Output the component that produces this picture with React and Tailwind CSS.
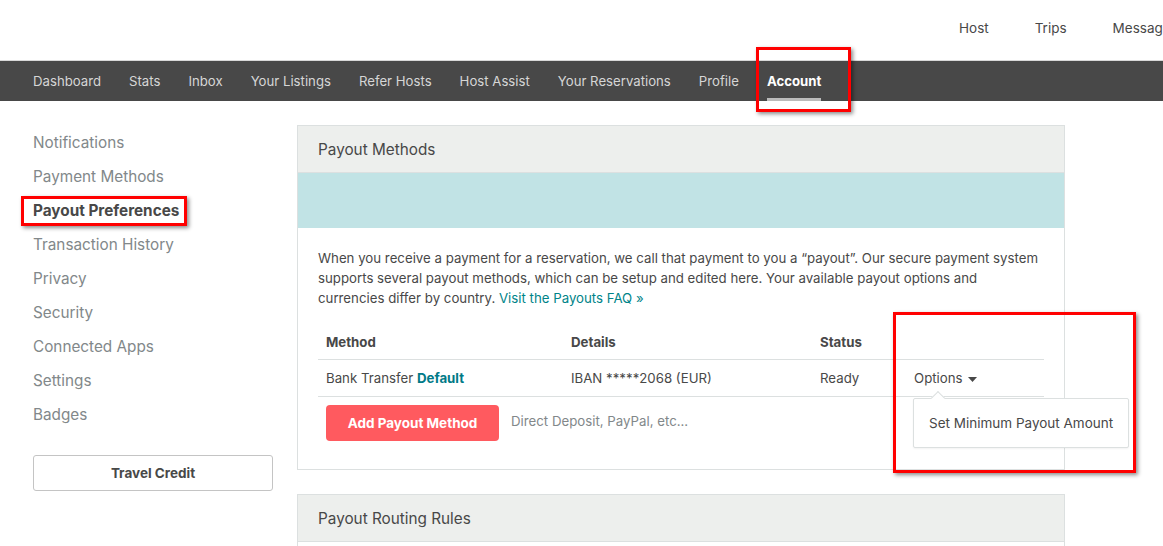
import React from "react";

const navItems = ["Dashboard","Stats","Inbox","Your Listings","Refer Hosts","Host Assist","Your Reservations","Profile"];
const sideItems = ["Notifications","Payment Methods","Payout Preferences","Transaction History","Privacy","Security","Connected Apps","Settings","Badges"];

function RedBox({ className }) {
  return <div className={"absolute border-[3px] border-[#ff0000] shadow-[2px_2px_4px_rgba(0,0,0,0.45)] pointer-events-none " + className} />;
}

export default function App() {
  return (
    <div className="relative w-[1163px] h-[546px] overflow-hidden bg-white text-[#484848]" style={{ fontFamily: "Inter, 'Liberation Sans', sans-serif" }}>
      {/* top bar */}
      <div className="h-[60px] flex items-center pl-[959px] gap-[46px] whitespace-nowrap text-[13.5px] text-[#484848] pb-[3px]">
        <span>Host</span>
        <span>Trips</span>
        <span>Messages</span>
      </div>
      {/* nav */}
      <div className="h-[41px] border-t border-[#d8d8d8] bg-[#484848] flex items-stretch pl-[33px] gap-[28px] text-[13.2px] text-[#d6d6d6] whitespace-nowrap">
        {navItems.map((n) => (
          <div key={n} className="flex items-center pt-[2px]">{n}</div>
        ))}
        <div className="relative flex items-center pt-[2px] text-white font-bold">
          Account
          <div className="absolute left-0 right-0 bottom-0 h-[3px] bg-[#bbbbbb]" />
        </div>
      </div>
      {/* content */}
      <div className="flex pt-[25px] pl-[33px]">
        <div className="w-[264px] shrink-0">
          {sideItems.map((s) => (
            <div key={s} className={"h-[34px] flex items-center text-[15.3px] " + (s === "Payout Preferences" ? "font-bold text-[#484848]" : "text-[#82888a]")}>{s}</div>
          ))}
          <button className="mt-[23px] w-[240px] h-[36px] border border-[#c4c4c4] rounded-[3px] text-[13.5px] font-bold text-[#484848] bg-white">Travel Credit</button>
        </div>
        <div className="w-[768px] shrink-0 -mt-[1px]">
          <div className="border border-[#dce0e0]">
            <div className="h-[47px] bg-[#edefed] border-b border-[#dce0e0] flex items-center pt-[2px] px-[20px] text-[15.3px]">Payout Methods</div>
            <div className="h-[55px] bg-[#c1e3e5]" />
            <div className="px-[20px] pt-[20px] pb-[28px]">
              <p className="text-[13.25px] leading-[20px] text-[#484848]">
                When you receive a payment for a reservation, we call that payment to you a “payout”. Our secure payment system supports several payout methods, which can be setup and edited here. Your available payout options and currencies differ by country. <span className="text-[#008489]">Visit the Payouts FAQ »</span>
              </p>
              <div className="mt-[17px] text-[13.25px]">
                <div className="grid grid-cols-[245px_249px_94px_1fr] h-[35px] items-center pt-[1px] border-b border-[#dce0e0] font-bold">
                  <div className="px-[8px]">Method</div>
                  <div className="px-[8px]">Details</div>
                  <div className="px-[8px]">Status</div>
                  <div />
                </div>
                <div className="grid grid-cols-[245px_249px_94px_1fr] h-[37px] items-center pt-[2px] border-b border-[#dce0e0]">
                  <div className="px-[8px]">Bank Transfer <span className="font-bold text-[#007a87]">Default</span></div>
                  <div className="px-[8px]">IBAN *****2068 (EUR)</div>
                  <div className="px-[8px]">Ready</div>
                  <div className="px-[8px] relative">
                    <span className="inline-flex items-center gap-[5px]">Options
                      <svg width="9" height="5" viewBox="0 0 9 5"><path d="M0 0h9L4.5 5z" fill="#484848" /></svg>
                    </span>
                    <div className="absolute left-[7px] top-[29px] w-[216px] h-[50px] bg-white border border-[#dce0e0] rounded-[2px] flex items-center pl-[15px] text-[13.5px] text-[#484848] z-10 shadow-[0_1px_2px_rgba(0,0,0,0.05)]">
                      Set Minimum Payout Amount
                      <div className="absolute left-[19px] -top-[6px] w-[10px] h-[10px] bg-white border-l border-t border-[#dce0e0] rotate-45" />
                    </div>
                  </div>
                </div>
                <div className="flex items-center gap-[12px] mt-[8px] pl-[8px]">
                  <button className="w-[173px] h-[36px] rounded-[4px] bg-[#ff5a5f] text-white font-bold text-[13.5px]">Add Payout Method</button>
                  <span className="text-[#82888a] -mt-[2px]">Direct Deposit, PayPal, etc...</span>
                </div>
              </div>
            </div>
          </div>
          <div className="mt-[24px] border border-[#dce0e0]">
            <div className="h-[47px] bg-[#edefed] border-b border-[#dce0e0] flex items-center pt-[2px] px-[20px] text-[15.3px]">Payout Routing Rules</div>
            <div className="h-[40px]" />
          </div>
        </div>
      </div>
      {/* annotations */}
      <RedBox className="left-[756px] top-[47px] w-[95px] h-[65px]" />
      <RedBox className="left-[21px] top-[196px] w-[166px] h-[30px]" />
      <RedBox className="left-[893px] top-[312px] w-[243px] h-[161px]" />
    </div>
  );
}
